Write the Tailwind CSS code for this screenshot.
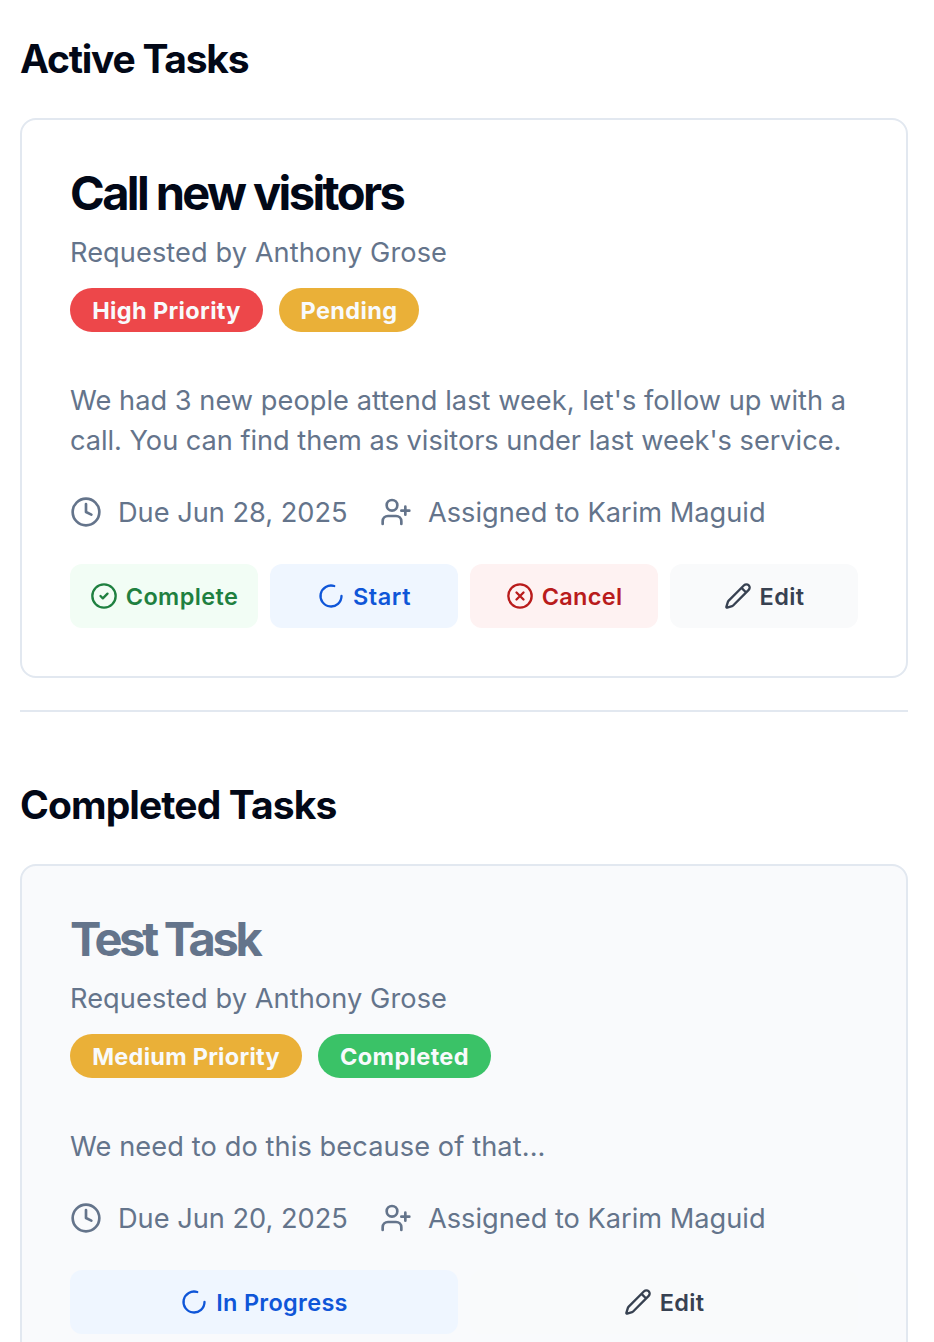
<!DOCTYPE html>
<html lang="en">
<head>
<meta charset="utf-8">
<title>Tasks</title>
<script src="https://cdn.jsdelivr.net/npm/@tailwindcss/browser@4"></script>
</head>
<body class="h-[1342px] overflow-hidden bg-white font-['Inter',sans-serif] text-[#020817]">
<svg class="hidden" aria-hidden="true">
  <symbol id="clock" viewBox="0 0 24 24"><circle cx="12" cy="12" r="10"/><path d="M12 6v6l4 2"/></symbol>
  <symbol id="user-plus" viewBox="0 0 24 24"><path d="M16 21v-2a4 4 0 0 0-4-4H6a4 4 0 0 0-4 4v2"/><circle cx="9" cy="7" r="4"/><path d="M19 8v6M22 11h-6"/></symbol>
  <symbol id="check" viewBox="0 0 24 24"><circle cx="12" cy="12" r="10"/><path d="m9 12 2 2 4-4"/></symbol>
  <symbol id="loader" viewBox="0 0 24 24"><path d="M21 12a9 9 0 1 1-6.219-8.56"/></symbol>
  <symbol id="x" viewBox="0 0 24 24"><circle cx="12" cy="12" r="10"/><path d="m15 9-6 6M9 9l6 6"/></symbol>
  <symbol id="pencil" viewBox="0 0 24 24"><path d="M21.174 6.812a1 1 0 0 0-3.986-3.987L3.842 16.174a2 2 0 0 0-.5.83l-1.321 4.352a.5.5 0 0 0 .623.622l4.353-1.32a2 2 0 0 0 .83-.497zM15 5l4 4"/></symbol>
</svg>
<main class="pl-5 pr-[26px] pt-[31px]">
  <section>
    <h2 class="mb-[31px] text-[39px] font-[650] leading-[56px] tracking-[-1.25px]">Active Tasks</h2>
    <article class="rounded-2xl border-2 border-slate-200 bg-white p-12">
      <h3 class="pt-px text-[47px] font-[650] leading-[48px] tracking-[-2.6px]">Call new visitors</h3>
      <p class="mt-[15px] translate-y-px text-[27.2px] font-[430] leading-10 tracking-[0.08px] text-[#64748b]">Requested by Anthony Grose</p>
      <div class="mt-4 flex gap-4 text-[23.5px] font-[650] tracking-[0.35px] text-slate-50">
        <span class="flex h-11 w-[193px] items-center justify-center whitespace-nowrap rounded-full bg-[#ed474a] pt-px">High Priority</span>
        <span class="flex h-11 w-[140px] items-center justify-center whitespace-nowrap rounded-full bg-[#eab038] pt-px">Pending</span>
      </div>
      <p class="mt-12 translate-y-px whitespace-nowrap text-[27.2px] font-[430] leading-10 text-[#64748b]"><span class="tracking-[0.04px]">We had 3 new people attend last week, let's follow up with a</span><br><span class="tracking-[-0.03px]">call. You can find them as visitors under last week's service.</span></p>
      <div class="mt-8 flex gap-8 whitespace-nowrap text-[27.2px] font-[430] leading-10 text-[#64748b]">
        <div class="flex w-[278px] items-center gap-4"><svg class="size-8 shrink-0 fill-none stroke-current stroke-2 [stroke-linecap:round] [stroke-linejoin:round]"><use href="#clock"/></svg><span class="translate-y-px">Due Jun 28, 2025</span></div>
        <div class="flex items-center gap-4"><svg class="size-8 shrink-0 fill-none stroke-current stroke-2 [stroke-linecap:round] [stroke-linejoin:round]"><use href="#user-plus"/></svg><span class="translate-y-px">Assigned to Karim Maguid</span></div>
      </div>
      <div class="mt-8 grid grid-cols-4 gap-3 text-[23.5px] font-[570] tracking-[0.4px]">
        <button class="flex h-16 items-center justify-center gap-2 rounded-xl bg-[#f2fdf5] text-[#1f8040]"><svg class="size-7 shrink-0 fill-none stroke-current stroke-2 [stroke-linecap:round] [stroke-linejoin:round]"><use href="#check"/></svg><span class="pt-px">Complete</span></button>
        <button class="flex h-16 items-center justify-center gap-2 rounded-xl bg-[#eff6ff] text-[#0f56d8]"><svg class="size-7 shrink-0 fill-none stroke-current stroke-2 [stroke-linecap:round] [stroke-linejoin:round]"><use href="#loader"/></svg><span class="pt-px tracking-[0.6px]">Start</span></button>
        <button class="flex h-16 items-center justify-center gap-2 rounded-xl bg-[#fef2f2] text-[#b91c1c]"><svg class="size-7 shrink-0 fill-none stroke-current stroke-2 [stroke-linecap:round] [stroke-linejoin:round]"><use href="#x"/></svg><span class="pt-px tracking-[0.3px]">Cancel</span></button>
        <button class="flex h-16 items-center justify-center gap-2 rounded-xl bg-[#f9fafb] text-[#374151]"><svg class="size-7 shrink-0 fill-none stroke-current stroke-2 [stroke-linecap:round] [stroke-linejoin:round]"><use href="#pencil"/></svg><span class="pt-px">Edit</span></button>
      </div>
    </article>
  </section>
  <hr class="mt-8 border-t-2 border-slate-200">
  <section class="mt-[65px]">
    <h2 class="mb-[31px] text-[39px] font-[650] leading-[56px] tracking-[-0.9px]">Completed Tasks</h2>
    <article class="rounded-2xl border-2 border-slate-200 bg-[#f9fafc] p-12">
      <h3 class="pt-px text-[47px] font-[650] leading-[48px] tracking-[-3.3px] text-[#64748b]">Test Task</h3>
      <p class="mt-[15px] translate-y-px text-[27.2px] font-[430] leading-10 tracking-[0.08px] text-[#64748b]">Requested by Anthony Grose</p>
      <div class="mt-4 flex gap-4 text-[23.5px] font-[650] tracking-[0.35px] text-slate-50">
        <span class="flex h-11 w-[232px] items-center justify-center whitespace-nowrap rounded-full bg-[#eab038] pt-px tracking-[0.25px]">Medium Priority</span>
        <span class="flex h-11 w-[173px] items-center justify-center whitespace-nowrap rounded-full bg-[#3ac267] pt-px">Completed</span>
      </div>
      <p class="mt-12 translate-y-px text-[27.2px] font-[430] leading-10 tracking-[0.1px] text-[#64748b]">We need to do this because of that...</p>
      <div class="mt-8 flex gap-8 whitespace-nowrap text-[27.2px] font-[430] leading-10 text-[#64748b]">
        <div class="flex w-[278px] items-center gap-4"><svg class="size-8 shrink-0 fill-none stroke-current stroke-2 [stroke-linecap:round] [stroke-linejoin:round]"><use href="#clock"/></svg><span class="translate-y-px">Due Jun 20, 2025</span></div>
        <div class="flex items-center gap-4"><svg class="size-8 shrink-0 fill-none stroke-current stroke-2 [stroke-linecap:round] [stroke-linejoin:round]"><use href="#user-plus"/></svg><span class="translate-y-px">Assigned to Karim Maguid</span></div>
      </div>
      <div class="mt-8 grid grid-cols-2 gap-3 text-[23.5px] font-[570] tracking-[0.3px]">
        <button class="flex h-16 items-center justify-center gap-2 rounded-xl bg-[#eff6ff] text-[#0f56d8]"><svg class="size-7 shrink-0 fill-none stroke-current stroke-2 [stroke-linecap:round] [stroke-linejoin:round]"><use href="#loader"/></svg><span class="pt-px">In Progress</span></button>
        <button class="flex h-16 items-center justify-center gap-2 rounded-xl bg-[#f9fafb] text-[#374151]"><svg class="size-7 shrink-0 fill-none stroke-current stroke-2 [stroke-linecap:round] [stroke-linejoin:round]"><use href="#pencil"/></svg><span class="pt-px">Edit</span></button>
      </div>
    </article>
  </section>
</main>
</body>
</html>
